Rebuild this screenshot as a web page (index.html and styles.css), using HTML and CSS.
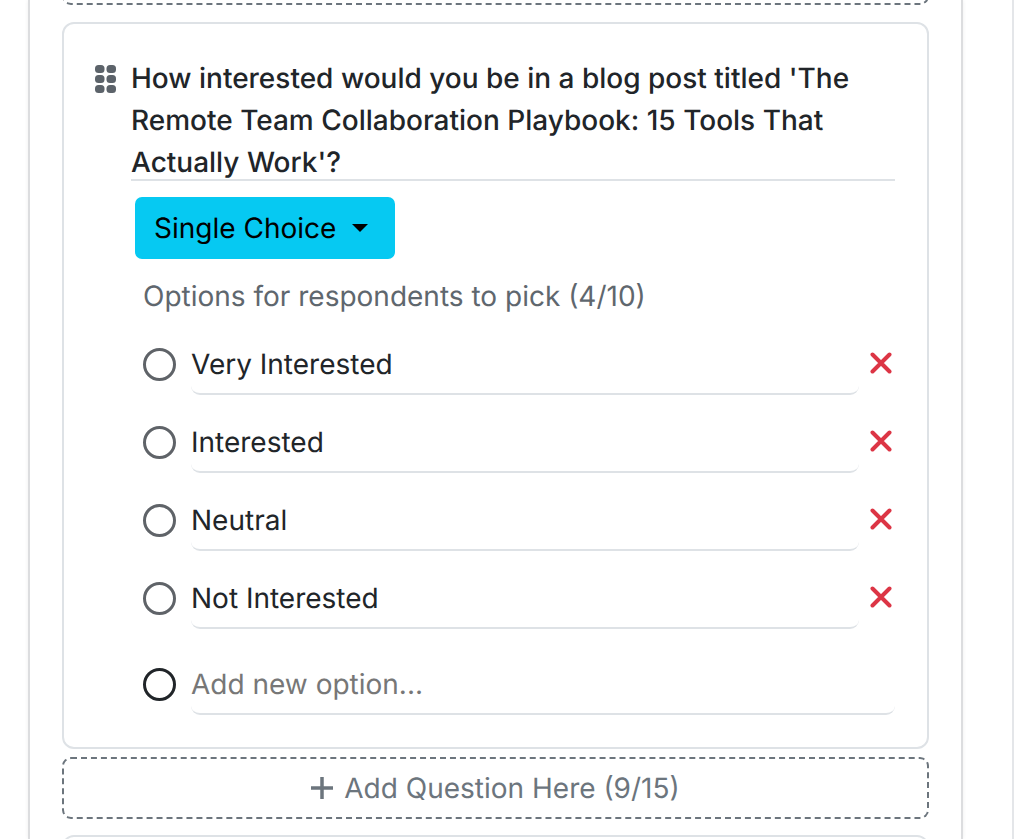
FILE: index.html
```html
<!DOCTYPE html>
<html lang="en">
<head>
<meta charset="utf-8">
<title>Survey editor</title>
<link rel="stylesheet" href="styles.css">
</head>
<body>
<div class="viewport">
  <main class="panel">
    <div class="add-question add-question-prev"></div>
    <section class="card">
      <div class="question-row">
        <svg class="grip" viewBox="0 0 21 28" aria-hidden="true">
          <rect x="0" y="0" width="9.5" height="8" rx="3.5"/><rect x="11.5" y="0" width="9.5" height="8" rx="3.5"/>
          <rect x="0" y="10" width="9.5" height="8" rx="3.5"/><rect x="11.5" y="10" width="9.5" height="8" rx="3.5"/>
          <rect x="0" y="20" width="9.5" height="8" rx="3.5"/><rect x="11.5" y="20" width="9.5" height="8" rx="3.5"/>
        </svg>
        <div class="question-text">How interested would you be in a blog post titled 'The Remote Team Collaboration Playbook: 15 Tools That Actually Work'?</div>
      </div>
      <div class="body">
        <button class="type-btn">Single Choice<span class="caret"></span></button>
        <div class="hint">Options for respondents to pick (4/10)</div>
        <div class="options">
          <div class="option"><span class="radio"></span><div class="field">Very Interested</div><svg class="remove" viewBox="0 0 22 22" aria-hidden="true"><path d="M2.5 2.5 19.5 19.5M19.5 2.5 2.5 19.5"/></svg></div>
          <div class="option"><span class="radio"></span><div class="field">Interested</div><svg class="remove" viewBox="0 0 22 22" aria-hidden="true"><path d="M2.5 2.5 19.5 19.5M19.5 2.5 2.5 19.5"/></svg></div>
          <div class="option"><span class="radio"></span><div class="field">Neutral</div><svg class="remove" viewBox="0 0 22 22" aria-hidden="true"><path d="M2.5 2.5 19.5 19.5M19.5 2.5 2.5 19.5"/></svg></div>
          <div class="option"><span class="radio"></span><div class="field">Not Interested</div><svg class="remove" viewBox="0 0 22 22" aria-hidden="true"><path d="M2.5 2.5 19.5 19.5M19.5 2.5 2.5 19.5"/></svg></div>
        </div>
        <div class="option option-new"><span class="radio radio-new"></span><div class="field field-new">Add new option...</div></div>
      </div>
    </section>
    <div class="add-question">
      <svg class="plus" viewBox="0 0 22 22" aria-hidden="true"><path d="M11 0V22M0 11H22"/></svg>
      <span>Add Question Here (9/15)</span>
    </div>
    <section class="card card-next"></section>
  </main>
  <div class="rail"></div>
</div>
</body>
</html>
```
FILE: styles.css
```css
* { box-sizing: border-box; }
html, body { margin: 0; padding: 0; background: #fff; }
body { font-family: Inter, "Liberation Sans", sans-serif; color: #212529; font-size: 28px; line-height: 42px; text-rendering: geometricPrecision; }
.viewport { height: 839px; overflow: hidden; display: flex; align-items: flex-start; padding-left: 28px; }
.panel {
  width: 935px; height: 839px; padding: 0 32px; background: #fff;
  border-left: 2px solid #dcdddf; border-right: 2px solid #dcdddf;
  box-shadow: 0 0 4px rgba(0, 0, 0, .07);
  display: flex; flex-direction: column; flex: none; overflow: hidden;
}
.rail { width: 2px; height: 839px; margin-left: 49px; background: #e4e6e9; flex: none; }
.add-question {
  height: 62px; flex: none; border: 2px dashed #6c757d; border-radius: 9px;
  display: flex; align-items: center; justify-content: center; gap: 11px;
  color: #6c757d; font-size: 28px;
}
.add-question-prev { margin-top: -57px; margin-bottom: 17px; }
.plus { width: 22px; height: 22px; flex: none; }
.plus path { stroke: #6c757d; stroke-width: 3.5; fill: none; }
.card { flex: none; height: 727px; border: 2px solid #dee2e6; border-radius: 12px; margin-bottom: 8px; background: #fff; padding: 33px 32px 0 31px; }
.card-next { margin-top: 8px; margin-bottom: 0; }
.add-question + .card-next { margin-top: 16px; }
.question-row { display: flex; gap: 15px; align-items: flex-start; }
.grip { width: 21px; height: 28px; margin-top: 8px; flex: none; fill: #5c636a; }
.question-text { flex: 1; font-weight: 500; border-bottom: 2px solid #dee2e6; padding-bottom: 0; height: 124px; }
.body { padding-left: 36px; }
.type-btn {
  display: flex; align-items: center; width: 260px; height: 62px; margin: 16px 0 16px 4px; padding: 0 0 0 19px;
  background: #06c9f2; border: 0; border-radius: 7px; color: #000;
  font: 400 28px/42px Inter, "Liberation Sans", sans-serif; text-rendering: geometricPrecision;
}
.caret { width: 0; height: 0; margin-left: 16px; border-top: 8px solid #000; border-left: 8px solid transparent; border-right: 8px solid transparent; }
.hint { height: 42px; margin-left: 12px; color: #5f676e; margin-bottom: 26px; }
.options { display: flex; flex-direction: column; gap: 26px; margin-left: 12px; }
.option { display: flex; align-items: flex-start; }
.radio { width: 33px; height: 33px; margin-top: 5px; border: 3px solid #5f6368; border-radius: 50%; flex: none; }
.field { width: 668px; height: 52px; margin-left: 15px; border-bottom: 2px solid #dee2e6; border-radius: 0 0 9px 9px; flex: none; }
.remove { width: 22px; height: 22px; margin: 9px 0 0 11px; flex: none; }
.remove path { stroke: #dc3545; stroke-width: 4; stroke-linecap: round; fill: none; }
.option-new { margin: 34px 0 0 12px; }
.radio-new { border-color: #212529; }
.field-new { width: 704px; color: #777; }
```
